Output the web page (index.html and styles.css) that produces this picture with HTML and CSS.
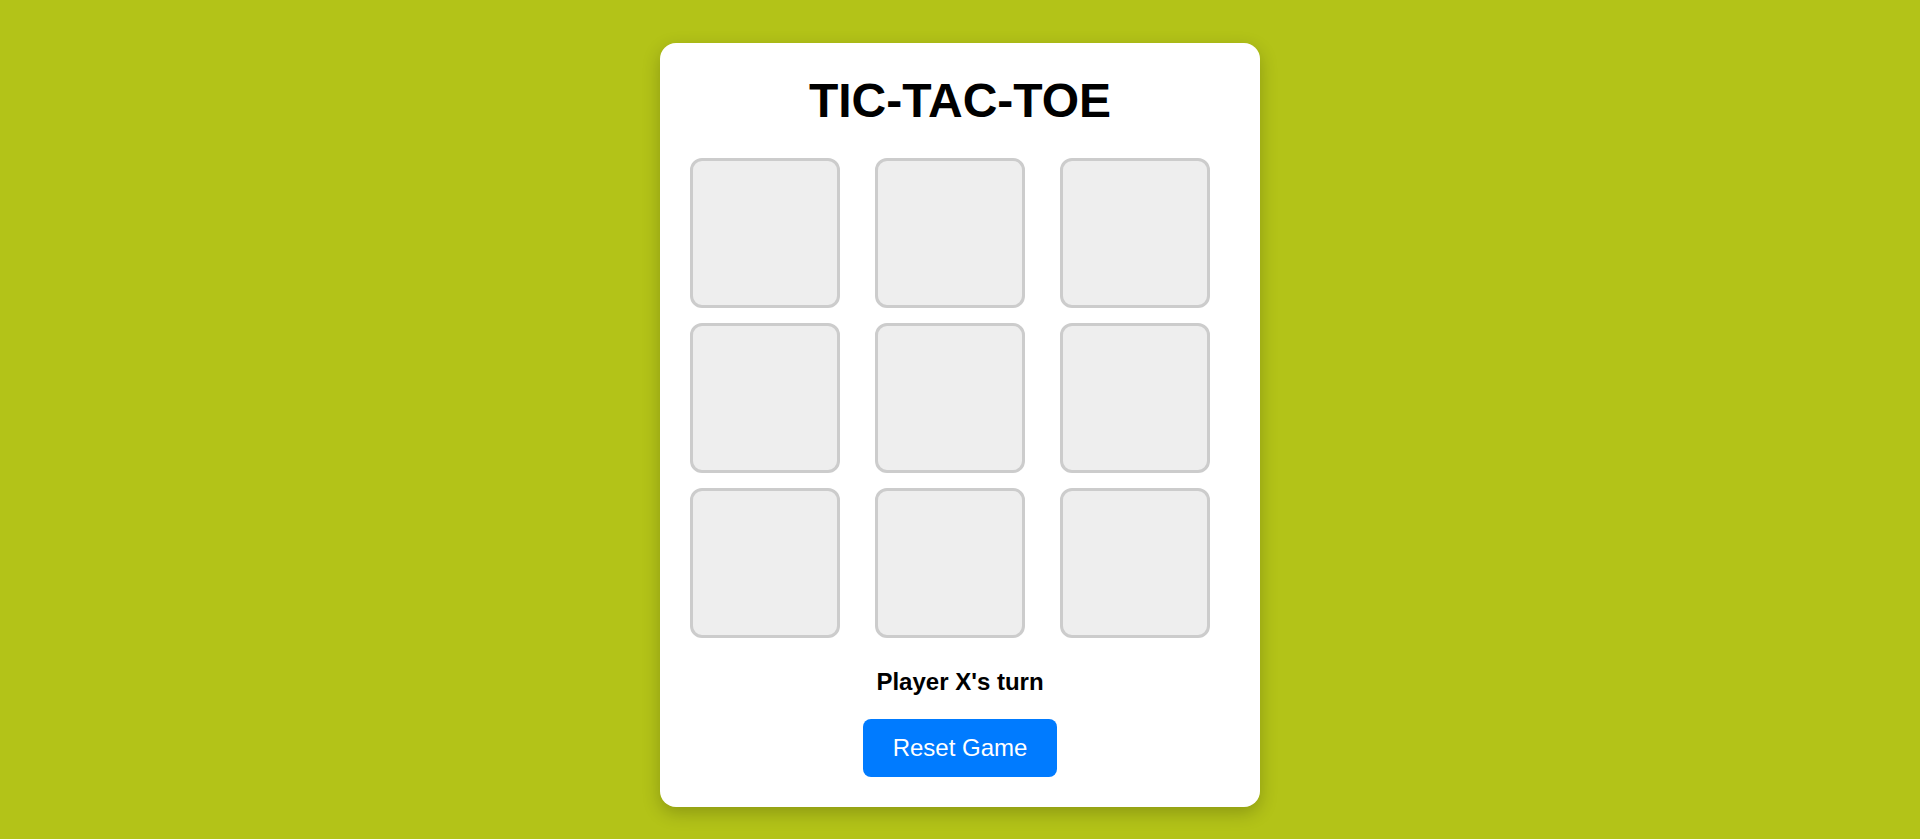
FILE: index.html
```html
<!DOCTYPE html>
<html lang="en">
<head>
<meta charset="utf-8">
<title>Tic-Tac-Toe</title>
<link rel="stylesheet" href="styles.css">
</head>
<body>
<main class="card">
  <h1 class="title">TIC-TAC-TOE</h1>
  <div class="board">
    <button class="cell"></button>
    <button class="cell"></button>
    <button class="cell"></button>
    <button class="cell"></button>
    <button class="cell"></button>
    <button class="cell"></button>
    <button class="cell"></button>
    <button class="cell"></button>
    <button class="cell"></button>
  </div>
  <p class="status">Player X's turn</p>
  <button class="reset">Reset Game</button>
</main>
</body>
</html>
```
FILE: styles.css
```css
html, body {
  margin: 0;
  padding: 0;
}
body {
  background: #b3c318;
  font-family: "Liberation Sans", Arial, sans-serif;
  min-height: 839px;
  display: flex;
  justify-content: center;
  align-items: flex-start;
}
.card {
  box-sizing: border-box;
  width: 600px;
  margin-top: 43px;
  padding: 30px 30px 30px 30px;
  background: #fff;
  border-radius: 16px;
  box-shadow: 0 6px 18px rgba(0, 0, 0, 0.22);
  display: flex;
  flex-direction: column;
  align-items: center;
}
.title {
  margin: 0 0 30px 0;
  font-size: 48px;
  font-weight: bold;
  color: #000;
  line-height: normal;
}
.board {
  align-self: flex-start;
  display: grid;
  grid-template-columns: repeat(3, 150px);
  grid-auto-rows: 150px;
  column-gap: 35px;
  row-gap: 15px;
}
.cell {
  box-sizing: border-box;
  width: 150px;
  height: 150px;
  margin: 0;
  padding: 0;
  background: #eeeeee;
  border: 3px solid #cccccc;
  border-radius: 12px;
}
.status {
  margin: 30px 0 23px 0;
  font-size: 24px;
  font-weight: bold;
  color: #000;
  line-height: normal;
}
.reset {
  margin: 0;
  padding: 15px 30px;
  font-family: "Liberation Sans", Arial, sans-serif;
  font-size: 24px;
  line-height: normal;
  color: #fff;
  background: #007bff;
  border: none;
  border-radius: 8px;
}
```
